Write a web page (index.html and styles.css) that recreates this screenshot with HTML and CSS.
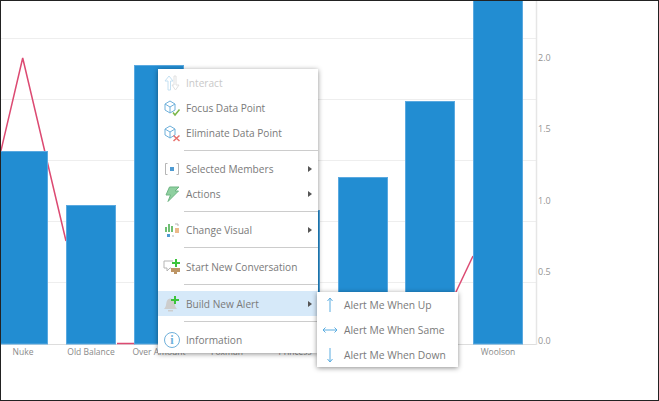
FILE: index.html
```html
<!DOCTYPE html>
<html lang="en">
<head>
    <meta charset="UTF-8">
    <title>Chart context menu</title>
    <link rel="stylesheet" href="styles.css">
</head>
<body>
    <div class="window">
        <svg class="chart" width="657" height="399" viewBox="0 0 657 399">
            <g class="grid">
                <line x1="0" y1="37.5" x2="535" y2="37.5"/>
                <line x1="0" y1="98.5" x2="535" y2="98.5"/>
                <line x1="0" y1="159.5" x2="535" y2="159.5"/>
                <line x1="0" y1="220.5" x2="535" y2="220.5"/>
                <line x1="0" y1="281.5" x2="535" y2="281.5"/>
                <line class="base" x1="0" y1="343.5" x2="535" y2="343.5"/>
                <line class="axis" x1="535.5" y1="0" x2="535.500" y2="344"/>
            </g>
            <polyline class="trend" points="-2,158 21.700,57 65,240"/>
            <polyline class="trend" points="116,342.5 134,342.5"/>
            <polyline class="trend" points="445,312 472,255"/>
            <g class="bars">
                <rect x="-1" y="150.5" width="47.5" height="192.5"/>
                <rect x="65.5" y="204.5" width="49" height="138.5"/>
                <rect x="133.5" y="64.5" width="49" height="278.5"/>
                <rect x="201.5" y="150.5" width="49" height="192.500"/>
                <rect x="269.5" y="209.5" width="49" height="133.5"/>
                <rect x="337.5" y="176.5" width="49" height="166.5"/>
                <rect x="404.5" y="100.5" width="49" height="242.5"/>
                <rect x="472.5" y="-2" width="49" height="345"/>
            </g>
            <g class="labels">
                <text x="22" y="354">Nuke</text>
                <text x="90" y="354">Old Balance</text>
                <text x="158" y="354">Over Amount</text>
                <text x="226" y="354">Foxman</text>
                <text x="294" y="354">Princess</text>
                <text x="497" y="354">Woolson</text>
            </g>
            <g class="ticks">
                <text x="537" y="60">2.0</text>
                <text x="537" y="131">1.5</text>
                <text x="537" y="203">1.0</text>
                <text x="537" y="274">0.5</text>
                <text x="537" y="343">0.0</text>
            </g>
        </svg>

        <div class="menu main-menu">
            <div class="item disabled">
                <svg class="icon" viewBox="0 0 18 18"><path class="pale" d="M5 16V7H2l4-5 4 5H7.500v9z"/><path class="pale-grey" d="M13 2v9h3l-3.500 5L9 11h2V2z"/></svg>
                <span>Interact</span>
            </div>
            <div class="item">
                <svg class="icon" viewBox="0 0 18 18"><path class="blue" d="M2 5l5-3 5 3v6l-5 3-5-3zM2 5l5 3 5-3M7 8v6"/><path class="green" d="M10 13.500l2 2.500 4.500-5.500"/></svg>
                <span>Focus Data Point</span>
            </div>
            <div class="item">
                <svg class="icon" viewBox="0 0 18 18"><path class="blue" d="M2 5l5-3 5 3v6l-5 3-5-3zM2 5l5 3 5-3M7 8v6"/><path class="red" d="M10.500 11.500l6 5.500M16.500 11.500l-6 5.500"/></svg>
                <span>Eliminate Data Point</span>
            </div>
            <div class="sep"></div>
            <div class="item">
                <svg class="icon" viewBox="0 0 18 18"><path class="grey" d="M4.500 3.500h-2v11h2M13.500 3.500h2v11h-2"/><rect class="fill-blue" x="7" y="7" width="4" height="4"/></svg>
                <span>Selected Members</span>
                <i class="arrow"></i>
            </div>
            <div class="item">
                <svg class="icon" viewBox="0 0 18 18"><path class="bolt" d="M6.500 2H16l-4 4h3.500L5 16.500 7.500 10H3z"/></svg>
                <span>Actions</span>
                <i class="arrow"></i>
            </div>
            <div class="sep"></div>
            <div class="item">
                <svg class="icon" viewBox="0 0 18 18"><rect class="fill-green" x="2" y="6" width="2" height="5"/><rect class="fill-green" x="5" y="3" width="2" height="8"/><rect class="fill-green" x="8" y="5" width="2" height="6"/><rect class="fill-orange" x="12" y="7" width="4" height="5"/><path class="grey" d="M12 3h3v2M11 15H9"/><rect class="fill-blue" x="4" y="13" width="3" height="3"/></svg>
                <span>Change Visual</span>
                <i class="arrow"></i>
            </div>
            <div class="sep wide"></div>
            <div class="item">
                <svg class="icon" viewBox="0 0 18 18"><path class="grey" d="M10 3H1v7h3v3l3-3h1"/><rect class="fill-brown" x="8" y="10" width="9" height="4"/><rect class="fill-brown" x="11" y="14" width="3" height="2"/><path class="plus" d="M13 1v8M9 5h8"/></svg>
                <span>Start New Conversation</span>
            </div>
            <div class="sep wide"></div>
            <div class="item active">
                <svg class="icon" viewBox="0 0 18 18"><path class="fill-grey" d="M1 14c2-2 2-4 2.500-7C4 4.500 6 3.500 7.500 3.500S11 4.500 11.500 7c.5 3 .5 5 2.500 7z"/><rect class="fill-grey" x="5" y="15" width="5" height="1.500"/><path class="plus" d="M12 1v8M8 5h8"/></svg>
                <span>Build New Alert</span>
                <i class="arrow"></i>
            </div>
            <div class="sep"></div>
            <div class="item">
                <svg class="icon" viewBox="0 0 18 18"><circle class="blue" cx="9" cy="9" r="7.500"/><text class="info-i" x="9" y="13">i</text></svg>
                <span>Information</span>
            </div>
        </div>

        <div class="menu sub-menu">
            <div class="item">
                <svg class="icon" viewBox="0 0 18 18"><path class="arrow-line" d="M9 16V2M6.500 5 9 2l2.500 3"/></svg>
                <span>Alert Me When Up</span>
            </div>
            <div class="item">
                <svg class="icon" viewBox="0 0 18 18"><path class="arrow-line" d="M2 9h14M4.500 6.500 2 9l2.500 2.500M13.500 6.500 16 9l-2.500 2.500"/></svg>
                <span>Alert Me When Same</span>
            </div>
            <div class="item">
                <svg class="icon" viewBox="0 0 18 18"><path class="arrow-line" d="M9 2v14M6.500 13 9 16l2.500-3"/></svg>
                <span>Alert Me When Down</span>
            </div>
        </div>
    </div>
</body>
</html>
```

FILE: styles.css
```css
* {
    box-sizing: border-box;
}
body {
    margin: 0;
    background: #fff;
    font-family: "Open Sans", "Noto Sans", sans-serif;
}
.window {
    position: relative;
    width: 659px;
    height: 401px;
    border: 1px solid #222;
    overflow: hidden;
    background: #fff;
}
.chart {
    display: block;
}
.grid line {
    stroke: #eeeeee;
    stroke-width: 1;
}
.grid .base {
    stroke: #dddddd;
}
.grid .axis {
    stroke: #e6e6e6;
    stroke-width: 1.5;
}
.trend {
    fill: none;
    stroke: #dc4a72;
    stroke-width: 1.5;
}
.bars rect {
    fill: #228dd2;
    stroke: #5aa9e0;
    stroke-width: 1;
}
.labels text {
    font-size: 8.5px;
    fill: #8a8a8a;
    text-anchor: middle;
}
.ticks text {
    font-size: 9px;
    fill: #959595;
}
.menu {
    position: absolute;
    background: #fff;
    box-shadow: 0 1px 5px rgba(0, 0, 0, 0.45);
    font-size: 10.15px;
    color: #7a7a7a;
}
.main-menu {
    left: 157px;
    top: 68px;
    width: 160px;
    height: 284px;
    padding-top: 1px;
}
.sub-menu {
    left: 316px;
    top: 291px;
    width: 141px;
    font-size: 10.3px;
}
.item {
    display: flex;
    align-items: center;
    height: 25px;
    padding: 0 6px 0 5px;
    gap: 5px;
    white-space: nowrap;
}
.item span {
    flex: 1;
}
.item .icon {
    width: 18px;
    height: 18px;
    flex: none;
}
.disabled {
    color: #c9c9c9;
}
.active {
    background: #d6e9f9;
}
.sep {
    height: 1px;
    background: #cccccc;
    margin: 5px 0 5px 26px;
}
.sep.wide {
    margin-bottom: 6px;
}
.arrow {
    width: 0;
    height: 0;
    border-left: 4px solid #555;
    border-top: 3.500px solid transparent;
    border-bottom: 3.500px solid transparent;
}
.sub-menu .item {
    padding: 0 4px;
}
.icon path, .icon circle {
    fill: none;
    stroke-width: 1;
}
.icon .pale {
    stroke: #c4e0f2;
}
.icon .pale-grey {
    stroke: #e0e0e0;
}
.icon .blue {
    stroke: #6fb0da;
}
.icon .grey {
    stroke: #b5b5b5;
}
.icon .green {
    stroke: #7ab648;
    stroke-width: 1.500;
}
.icon .red {
    stroke: #e8706c;
    stroke-width: 1.500;
}
.icon .plus {
    stroke: #3cc43c;
    stroke-width: 2;
}
.icon .bolt {
    fill: #8fd0a0;
    stroke: #6fb583;
}
.icon .fill-blue {
    fill: #4f9bd2;
}
.icon .fill-green {
    fill: #6fbf73;
}
.icon .fill-orange {
    fill: #ecb98a;
}
.icon .fill-brown {
    fill: #bd9565;
}
.icon .fill-grey {
    fill: #cdcdcd;
}
.icon .arrow-line {
    stroke: #5aace0;
}
.info-i {
    font-family: "Liberation Serif", serif;
    font-size: 12px;
    font-weight: bold;
    fill: #6fb0da;
    text-anchor: middle;
}
```
